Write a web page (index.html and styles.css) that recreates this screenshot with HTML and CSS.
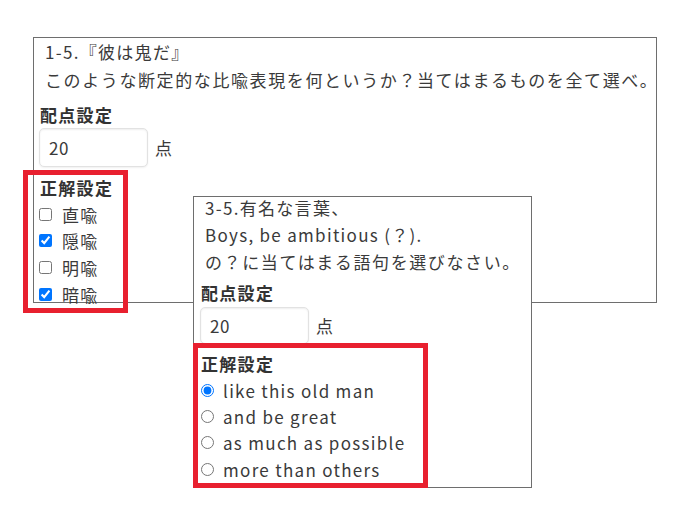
FILE: index.html
```html
<!DOCTYPE html>
<html lang="ja">
<head>
<meta charset="utf-8">
<link rel="stylesheet" href="styles.css">
</head>
<body>
<div class="canvas">
  <section class="panel panel-one">
    <div class="question q-one">
      <p>1-5.『彼は鬼だ』</p>
      <p class="jp">このような断定的な比喩表現を何というか？当てはまるものを全て選べ。</p>
    </div>
    <h3 class="label label-score">配点設定</h3>
    <div class="score">
      <input class="score-input" type="text" value="20">
      <span class="unit">点</span>
    </div>
    <h3 class="label label-answer">正解設定</h3>
    <ul class="choices">
      <li><input type="checkbox"><span>直喩</span></li>
      <li><input type="checkbox" checked><span>隠喩</span></li>
      <li><input type="checkbox"><span>明喩</span></li>
      <li><input type="checkbox" checked><span>暗喩</span></li>
    </ul>
  </section>

  <section class="panel panel-two">
    <div class="question q-two">
      <p>3-5.有名な言葉、</p>
      <p>Boys, be ambitious (？).</p>
      <p class="jp">の？に当てはまる語句を選びなさい。</p>
    </div>
    <h3 class="label label-score2">配点設定</h3>
    <div class="score">
      <input class="score-input score-input2" type="text" value="20">
      <span class="unit">点</span>
    </div>
    <h3 class="label label-answer2">正解設定</h3>
    <ul class="choices choices2">
      <li><input type="radio" name="q35" checked><span>like this old man</span></li>
      <li><input type="radio" name="q35"><span>and be great</span></li>
      <li><input type="radio" name="q35"><span>as much as possible</span></li>
      <li><input type="radio" name="q35"><span>more than others</span></li>
    </ul>
  </section>

  <div class="highlight hl-one"></div>
  <div class="highlight hl-two"></div>
</div>
</body>
</html>
```

FILE: styles.css
```css
* { box-sizing: border-box; }

html, body {
  margin: 0;
  padding: 0;
  background: #ffffff;
}

body {
  font-family: "Noto Sans CJK JP", "Noto Sans", sans-serif;
  font-size: 17px;
  color: #3a3a3a;
  letter-spacing: 1.3px;
}

.canvas {
  position: relative;
  width: 691px;
  height: 510px;
  overflow: hidden;
  padding: 37px 0 0 33px;
}

.panel {
  border: 1px solid #6e6e6e;
  background: #ffffff;
  padding: 0 6px;
}

.panel-one {
  width: 624px;
  height: 266px;
}

.panel-two {
  position: absolute;
  left: 193px;
  top: 196px;
  width: 339px;
  height: 292px;
  padding: 0 7px;
  overflow: hidden;
}

.question p {
  margin: 0;
  white-space: nowrap;
}

.question .jp {
  letter-spacing: 1.6px;
}

.q-one {
  padding-left: 5px;
  line-height: 28px;
}

.q-two {
  padding-left: 4px;
  line-height: 27px;
  margin-top: -3px;
}

.label {
  margin: 0;
  font-size: 17px;
  font-weight: 700;
  line-height: 26px;
  color: #333333;
}

.label-score { margin-top: 8px; }
.label-answer { margin-top: 8px; }
.label-score2 { margin-top: 5px; }
.label-answer2 { margin-top: 7px; }

.score {
  display: flex;
  align-items: center;
}

.score-input {
  width: 109px;
  height: 39px;
  border: 1px solid #e2e2e2;
  border-radius: 5px;
  box-shadow: inset 0 1px 2px rgba(0, 0, 0, 0.07), 0 1px 2px rgba(0, 0, 0, 0.06);
  padding: 0 9px;
  font-family: inherit;
  font-size: 17px;
  color: #3a3a3a;
  letter-spacing: 0.5px;
  margin: 0 0 0 -1px;
  background: #ffffff;
}

.score-input2 {
  margin-top: 1px;
  height: 37px;
}

.unit {
  margin-left: 7px;
}

.choices {
  list-style: none;
  margin: 0;
  padding: 0;
}

.choices li {
  display: flex;
  align-items: center;
  height: 26.6px;
}

.choices input {
  width: 13px;
  height: 13px;
  margin: 0 10px 0 -1px;
  flex: none;
}

.choices2 li {
  height: 26.4px;
}

.choices2 input {
  margin: 0 9px 0 0;
}

.highlight {
  position: absolute;
  border: 5px solid #e8202f;
  pointer-events: none;
}

.hl-one {
  left: 23px;
  top: 170px;
  width: 105px;
  height: 143px;
}

.hl-two {
  left: 193px;
  top: 343px;
  width: 235px;
  height: 145px;
}
```
